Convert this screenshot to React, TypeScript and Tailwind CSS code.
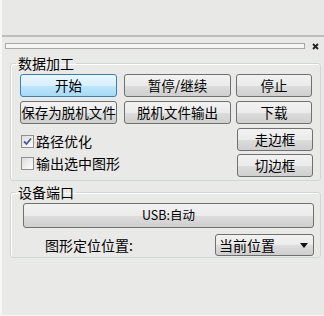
import React from "react";

const font = { fontFamily: '"Noto Sans CJK SC", "Noto Sans", sans-serif' };

function Btn({ children, className = "", primary = false }: { children: React.ReactNode; className?: string; primary?: boolean }) {
  return (
    <div
      className={
        "flex items-center justify-center rounded-[3px] border text-[13.5px] leading-none text-black " +
        (primary
          ? "border-[#3c7fb1] bg-[linear-gradient(#eaf6fd_0%,#d9f0fc_50%,#bee6fd_51%,#a7d9f5_100%)] "
          : "border-[#707070] bg-[linear-gradient(#f2f2f2_0%,#ebebeb_50%,#dddddd_51%,#cfcfcf_100%)] ") +
        className
      }
    >
      {children}
    </div>
  );
}

function Check({ checked, label }: { checked: boolean; label: string }) {
  return (
    <div className="flex items-center gap-[2px] h-[16px]">
      <div className="w-[13px] h-[13px] border border-[#8e8f8f] bg-[linear-gradient(135deg,#dcdcdc,#ffffff)] flex items-center justify-center">
        {checked && (
          <svg width="9" height="9" viewBox="0 0 9 9">
            <path d="M1 4.5 L3.5 7 L8 1.5" fill="none" stroke="#4a5f97" strokeWidth="1.8" />
          </svg>
        )}
      </div>
      <span className="text-[14px] leading-none text-black">{label}</span>
    </div>
  );
}

export default function App() {
  return (
    <div
      className="w-[324px] h-[316px] bg-[#e9e9e7] border-l-2 border-b border-[#f7f7f7] flex flex-col overflow-hidden"
      style={font}
    >
      <div className="h-[37px] border-b-2 border-[#bdbdbb] bg-[#e8e8e6]" />
      <div className="flex items-center h-[18px] pl-[3px] pr-[5px] gap-[7px]">
        <div className="w-[300px] h-[6px] border border-[#a8a8a8] bg-[#f6f6f6]" />
        <svg width="7" height="7" viewBox="0 0 7 7">
          <path d="M1 1 L6 6 M6 1 L1 6" stroke="#222" strokeWidth="1.8" />
        </svg>
      </div>
      <fieldset className="ml-[8px] w-[311px] border border-[#d0d6da] rounded-[3px] shadow-[inset_1px_1px_0_#fff] pl-[9px] pr-[7px] pb-[3px]">
        <legend className="ml-[-4px] px-[2px] text-[14px] leading-[16px] text-black">数据加工</legend>
        <div className="flex flex-col gap-[4px] pt-[3px]">
          <div className="flex h-[23px]">
            <Btn primary className="w-[97px]">开始</Btn>
            <Btn className="w-[107px] ml-[7px]">暂停/继续</Btn>
            <Btn className="w-[76px] ml-[5px]">停止</Btn>
          </div>
          <div className="flex h-[23px]">
            <Btn className="w-[97px]">保存为脱机文件</Btn>
            <Btn className="w-[107px] ml-[7px]">脱机文件输出</Btn>
            <Btn className="w-[76px] ml-[5px]">下载</Btn>
          </div>
          <div className="flex">
            <div className="flex-1 flex flex-col gap-[6px] pt-[5px] pl-[1px]">
              <Check checked label="路径优化" />
              <Check checked={false} label="输出选中图形" />
            </div>
            <div className="flex flex-col gap-[3px]">
              <Btn className="w-[76px] h-[23px]">走边框</Btn>
              <Btn className="w-[76px] h-[23px]">切边框</Btn>
            </div>
          </div>
        </div>
      </fieldset>
      <fieldset className="ml-[8px] mt-[3px] w-[311px] border border-[#d0d6da] rounded-[3px] shadow-[inset_1px_1px_0_#fff] pl-[12px] pr-[6px] pb-[1px]">
        <legend className="ml-[-7px] px-[2px] text-[14px] leading-[16px] text-black">设备端口</legend>
        <div className="pt-[3px] flex flex-col">
          <Btn className="w-[291px] h-[25px]">
            <span className="text-[12.5px]">USB:自动</span>
          </Btn>
          <div className="flex items-center mt-[6px] h-[22px]">
            <span className="ml-[22px] text-[14px] leading-none text-black">图形定位位置:</span>
            <div className="ml-auto w-[99px] h-[22px] border border-[#707070] rounded-[3px] bg-[linear-gradient(#f2f2f2_0%,#ebebeb_50%,#dddddd_51%,#cfcfcf_100%)] flex items-center pl-[3px] pr-[5px]">
              <span className="text-[14px] leading-none text-black">当前位置</span>
              <svg className="ml-auto" width="8" height="5" viewBox="0 0 8 5">
                <path d="M0 0 H8 L4 5 Z" fill="#111" />
              </svg>
            </div>
          </div>
        </div>
      </fieldset>
    </div>
  );
}
